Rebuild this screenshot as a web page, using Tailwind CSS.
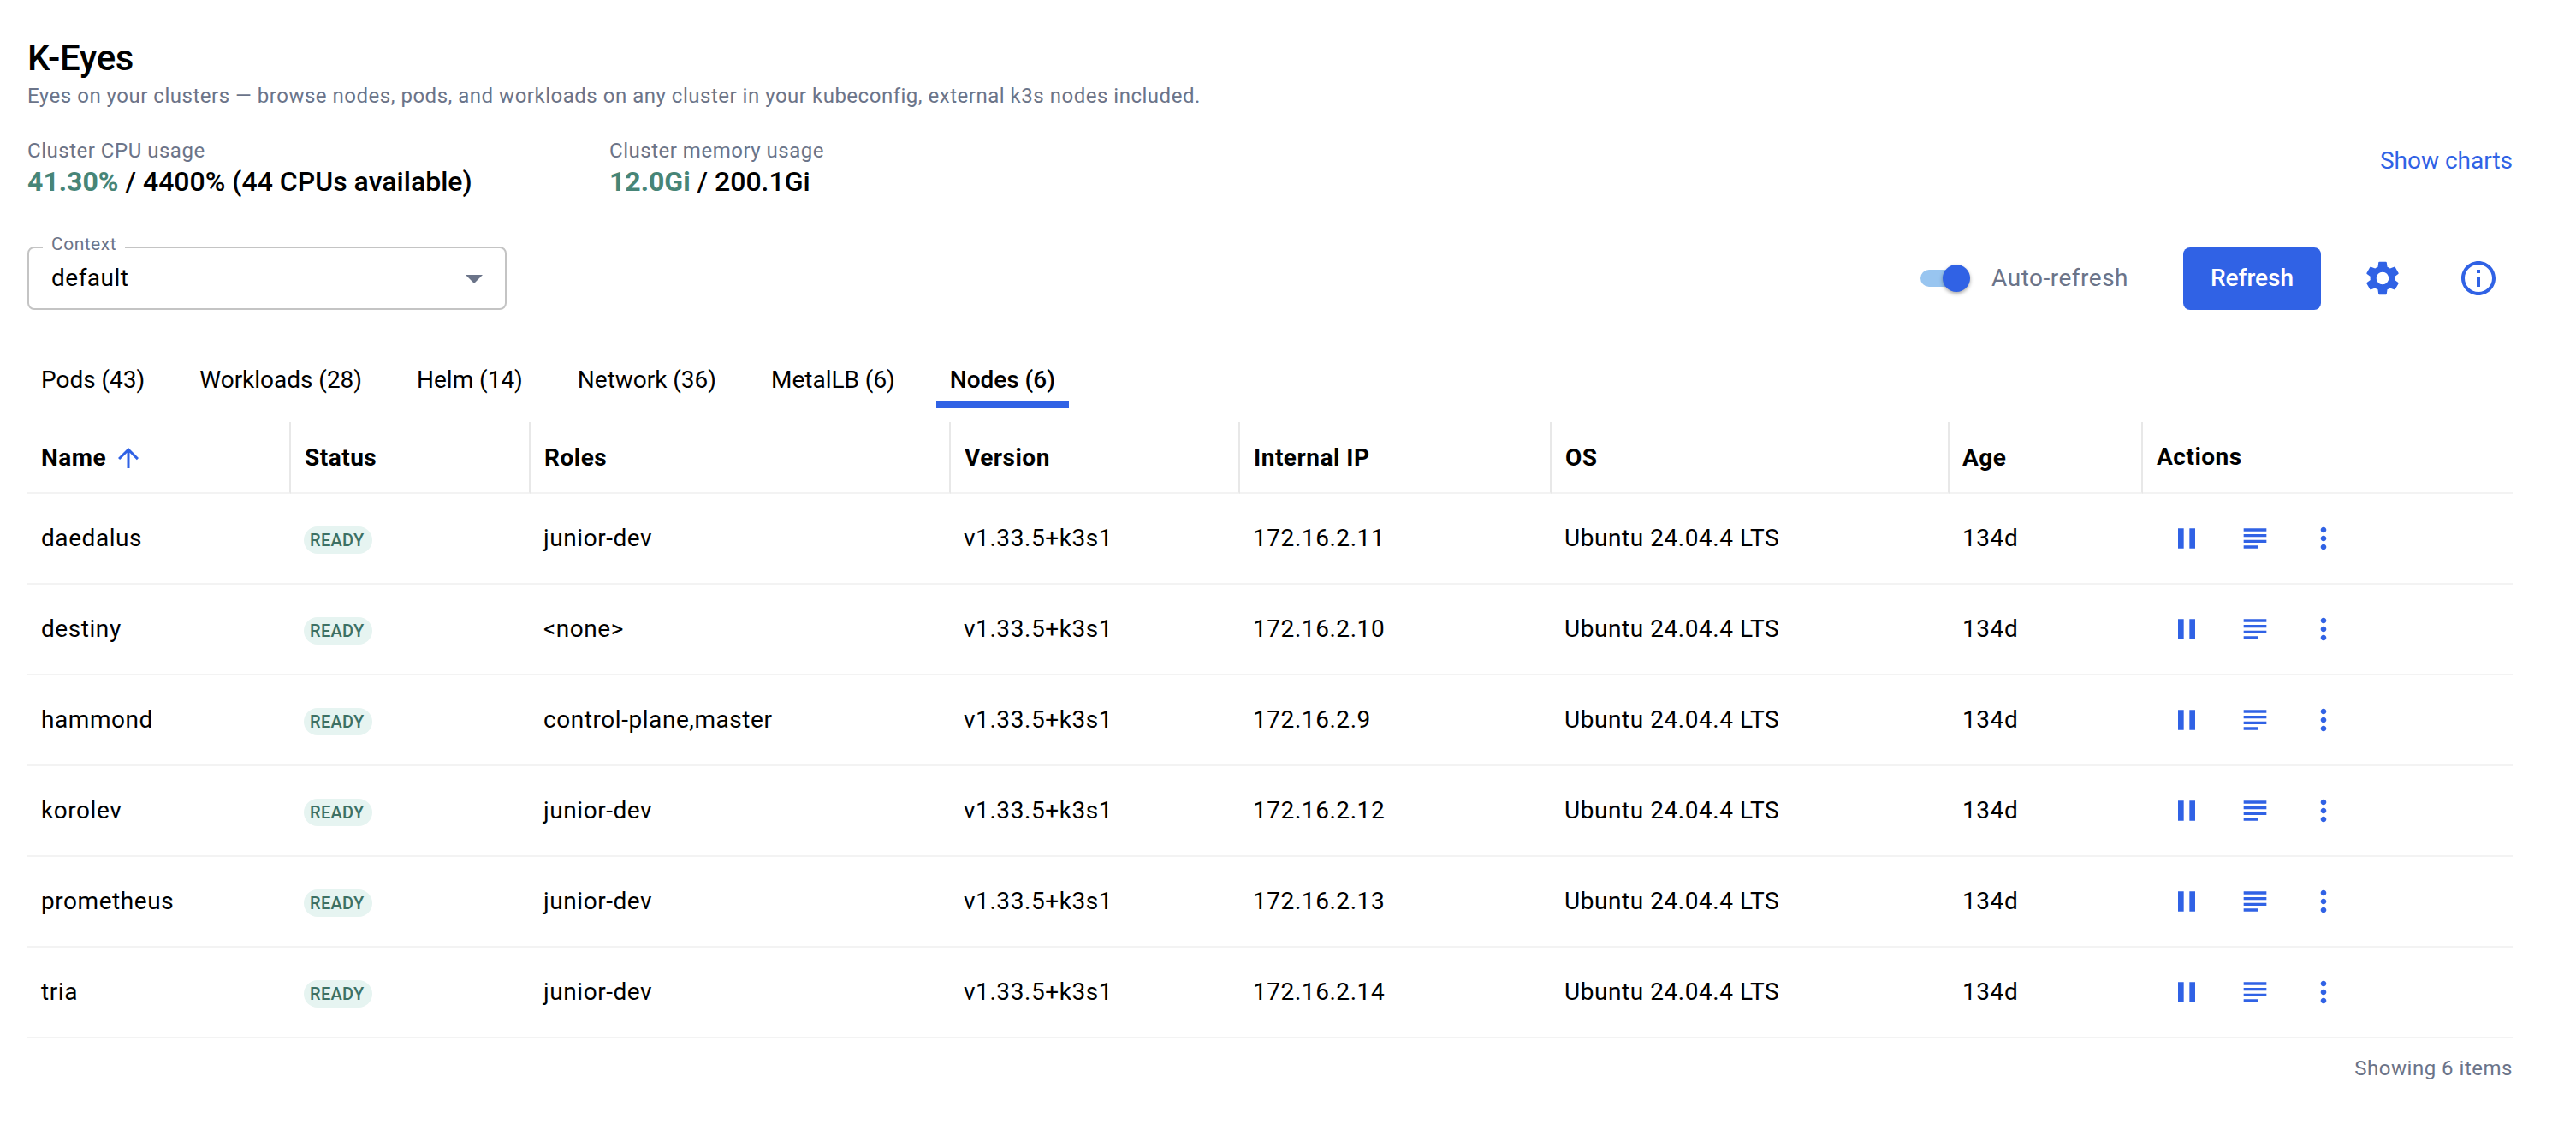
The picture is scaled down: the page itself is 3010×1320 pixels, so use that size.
<!DOCTYPE html>
<html lang="en">
<head>
    <meta charset="UTF-8">
    <meta name="viewport" content="width=device-width, initial-scale=1.0">
    <title>K-Eyes</title>
    <script src="https://cdn.jsdelivr.net/npm/@tailwindcss/browser@4"></script>
</head>
<body class="bg-white text-black font-[Roboto,sans-serif] text-[28px] leading-10 pl-8 pr-[74px] pt-11">
    <header>
        <h1 class="text-[42px] leading-[48px] font-medium tracking-[-0.4px]">K-Eyes</h1>
        <p class="mt-1 text-2xl leading-8 tracking-[0.514px] text-[#6b7489]">Eyes on your clusters — browse nodes, pods, and workloads on any cluster in your kubeconfig, external k3s nodes included.</p>
    </header>

    <!-- Cluster usage -->
    <section class="mt-8 flex items-start h-[72px]">
        <div class="w-[680px]">
            <p class="text-2xl leading-8 tracking-[0.514px] text-[#6b7489]">Cluster CPU usage</p>
            <p class="text-[32px] leading-10 font-medium tracking-[0.02px]"><span class="font-bold text-[#478577]">41.30%</span> / 4400% (44 CPUs available)</p>
        </div>
        <div>
            <p class="text-2xl leading-8 tracking-[0.514px] text-[#6b7489]">Cluster memory usage</p>
            <p class="text-[32px] leading-10 font-medium"><span class="font-bold text-[#478577]">12.0Gi</span> / 200.1Gi</p>
        </div>
        <a href="#" class="ml-auto mt-2 text-[#3062e5]">Show charts</a>
    </section>

    <!-- Toolbar -->
    <section class="mt-14 flex items-center h-[74px]">
        <fieldset class="relative w-[560px] h-[74px] rounded-lg border-2 border-[#c4c4c4] flex items-center justify-between pl-[26px] pr-3">
            <span class="absolute -top-[21px] left-4 px-[10px] bg-white text-[21px] leading-8 tracking-[0.5px] text-[#6b7489]">Context</span>
            <span class="tracking-[0.5px]">default</span>
            <svg class="size-12 text-[#6b7489]" viewBox="0 0 24 24" fill="currentColor"><path d="M7 10l5 5 5-5z"/></svg>
        </fieldset>
        <div class="ml-auto flex items-center">
            <div class="relative w-[58px] h-8 flex items-center">
                <span class="w-[52px] h-5 rounded-full bg-[#98c5f0]"></span>
                <span class="absolute right-0 top-0 size-8 rounded-full bg-[#3062e5] shadow-[0_2px_4px_rgba(0,0,0,0.35)]"></span>
            </div>
            <span class="ml-[25px] tracking-[0.5px] text-[#6b7489]">Auto-refresh</span>
            <button class="ml-16 w-[161px] h-[73px] rounded-lg bg-[#3062e5] text-white font-medium">Refresh</button>
            <button class="ml-8 size-20 flex items-center justify-center text-[#3062e5]">
                <svg class="size-12" viewBox="0 0 24 24" fill="currentColor"><path d="M19.14 12.94c.04-.3.06-.61.06-.94 0-.32-.02-.64-.07-.94l2.03-1.58c.18-.14.23-.41.12-.61l-1.92-3.32c-.12-.22-.37-.29-.59-.22l-2.39.96c-.5-.38-1.03-.7-1.62-.94l-.36-2.54c-.04-.24-.24-.41-.48-.41h-3.84c-.24 0-.43.17-.47.41l-.36 2.54c-.59.24-1.13.57-1.62.94l-2.39-.96c-.22-.08-.47 0-.59.22L2.74 8.87c-.12.21-.08.47.12.61l2.03 1.58c-.05.3-.09.63-.09.94s.02.64.07.94l-2.03 1.58c-.18.14-.23.41-.12.61l1.92 3.32c.12.22.37.29.59.22l2.39-.96c.5.38 1.03.7 1.62.94l.36 2.54c.05.24.24.41.48.41h3.84c.24 0 .44-.17.47-.41l.36-2.54c.59-.24 1.13-.56 1.62-.94l2.39.96c.22.08.47 0 .59-.22l1.92-3.32c.12-.22.07-.47-.12-.61l-2.01-1.58zM12 15.6c-1.98 0-3.6-1.62-3.6-3.6s1.62-3.6 3.6-3.6 3.6 1.62 3.6 3.6-1.62 3.6-3.6 3.6z"/></svg>
            </button>
            <button class="ml-8 size-20 flex items-center justify-center text-[#3062e5]">
                <svg class="size-12" viewBox="0 0 24 24" fill="currentColor"><path d="M11 7h2v2h-2zm0 4h2v6h-2zm1-9C6.48 2 2 6.48 2 12s4.48 10 10 10 10-4.48 10-10S17.52 2 12 2zm0 18c-4.41 0-8-3.59-8-8s3.59-8 8-8 8 3.59 8 8-3.59 8-8 8z"/></svg>
            </button>
        </div>
    </section>

    <!-- Tabs -->
    <nav class="mt-[47px] flex gap-8 tracking-[-0.02px]">
        <a href="#" class="h-[68px] px-4 pt-0.5 flex items-center border-y-8 border-transparent">Pods (43)</a>
        <a href="#" class="h-[68px] px-4 pt-0.5 flex items-center border-y-8 border-transparent">Workloads (28)</a>
        <a href="#" class="h-[68px] px-4 pt-0.5 flex items-center border-y-8 border-transparent">Helm (14)</a>
        <a href="#" class="h-[68px] px-4 pt-0.5 flex items-center border-y-8 border-transparent">Network (36)</a>
        <a href="#" class="h-[68px] px-4 pt-0.5 flex items-center border-y-8 border-transparent">MetalLB (6)</a>
        <a href="#" class="h-[68px] px-4 pt-0.5 flex items-center border-y-8 border-t-transparent border-b-[#3062e5] font-medium">Nodes (6)</a>
    </nav>

    <!-- Nodes table -->
    <table class="mt-4 w-full table-fixed border-separate border-spacing-0 text-left tracking-[0.5px]">
        <colgroup>
            <col class="w-[308px]">
            <col class="w-[280px]">
            <col class="w-[491px]">
            <col class="w-[338px]">
            <col class="w-[364px]">
            <col class="w-[465px]">
            <col class="w-[226px]">
            <col>
        </colgroup>
        <thead>
            <tr class="h-[84px]">
                <th class="p-0 pl-4 pt-0.5 border-b-2 border-b-[#f3f3f3] border-r-2 border-r-[#e8e8e8] font-bold">
                    <div class="flex items-center">Name
                        <svg class="ml-2 size-9 text-[#3062e5]" viewBox="0 0 24 24" fill="currentColor"><path d="M4 12l1.41 1.41L11 7.83V20h2V7.83l5.58 5.59L20 12l-8-8-8 8z"/></svg>
                    </div>
                </th>
                <th class="p-0 pl-4 pt-0.5 border-b-2 border-b-[#f3f3f3] border-r-2 border-r-[#e8e8e8] font-bold">Status</th>
                <th class="p-0 pl-4 pt-0.5 border-b-2 border-b-[#f3f3f3] border-r-2 border-r-[#e8e8e8] font-bold">Roles</th>
                <th class="p-0 pl-4 pt-0.5 border-b-2 border-b-[#f3f3f3] border-r-2 border-r-[#e8e8e8] font-bold">Version</th>
                <th class="p-0 pl-4 pt-0.5 border-b-2 border-b-[#f3f3f3] border-r-2 border-r-[#e8e8e8] font-bold">Internal IP</th>
                <th class="p-0 pl-4 pt-0.5 border-b-2 border-b-[#f3f3f3] border-r-2 border-r-[#e8e8e8] font-bold">OS</th>
                <th class="p-0 pl-[15px] pt-0.5 border-b-2 border-b-[#f3f3f3] border-r-2 border-r-[#e8e8e8] font-bold">Age</th>
                <th class="p-0 pl-4 border-b-2 border-b-[#f3f3f3] font-bold">Actions</th>
            </tr>
        </thead>
        <tbody id="node-rows" class="tracking-[0.56px]"></tbody>
    </table>

    <p class="mt-[15px] text-right text-2xl leading-10 tracking-[0.514px] text-[#6b7489]">Showing 6 items</p>

    <script>
        const nodes = [
            { name: 'daedalus', roles: 'junior-dev', ip: '172.16.2.11' },
            { name: 'destiny', roles: '&lt;none&gt;', ip: '172.16.2.10' },
            { name: 'hammond', roles: 'control-plane,master', ip: '172.16.2.9' },
            { name: 'korolev', roles: 'junior-dev', ip: '172.16.2.12' },
            { name: 'prometheus', roles: 'junior-dev', ip: '172.16.2.13' },
            { name: 'tria', roles: 'junior-dev', ip: '172.16.2.14' },
        ];

        document.getElementById('node-rows').innerHTML = nodes.map(node => `
            <tr class="h-[106px]">
                <td class="p-0 pl-4 border-b-2 border-[#f3f3f3]">${node.name}</td>
                <td class="p-0 pl-[15px] border-b-2 border-[#f3f3f3]">
                    <div class="mt-1 w-20 h-8 pl-[7px] rounded-full bg-[#e6f4f1] text-[#3c7064] text-xl leading-8 font-medium tracking-[0.3px]">READY</div>
                </td>
                <td class="p-0 pl-[15px] border-b-2 border-[#f3f3f3]">${node.roles}</td>
                <td class="p-0 pl-[15px] border-b-2 border-[#f3f3f3]">v1.33.5+k3s1</td>
                <td class="p-0 pl-[15px] border-b-2 border-[#f3f3f3]">${node.ip}</td>
                <td class="p-0 pl-[15px] border-b-2 border-[#f3f3f3]">Ubuntu 24.04.4 LTS</td>
                <td class="p-0 pl-[15px] border-b-2 border-[#f3f3f3]">134d</td>
                <td class="p-0 pl-[31px] border-b-2 border-[#f3f3f3]">
                    <div class="flex gap-10 text-[#3062e5]">
                        <svg class="size-10" viewBox="0 0 24 24" fill="currentColor"><path d="M6 19h4V5H6v14zm8-14v14h4V5h-4z"/></svg>
                        <svg class="size-10" viewBox="0 0 24 24" fill="currentColor"><path d="M14 17H4v2h10v-2zm6-8H4v2h16V9zM4 15h16v-2H4v2zM4 5v2h16V5H4z"/></svg>
                        <svg class="size-10" viewBox="0 0 24 24" fill="currentColor"><path d="M12 8c1.1 0 2-.9 2-2s-.9-2-2-2-2 .9-2 2 .9 2 2 2zm0 2c-1.1 0-2 .9-2 2s.9 2 2 2 2-.9 2-2-.9-2-2-2zm0 6c-1.1 0-2 .9-2 2s.9 2 2 2 2-.9 2-2-.9-2-2-2z"/></svg>
                    </div>
                </td>
            </tr>`).join('');
    </script>
</body>
</html>
